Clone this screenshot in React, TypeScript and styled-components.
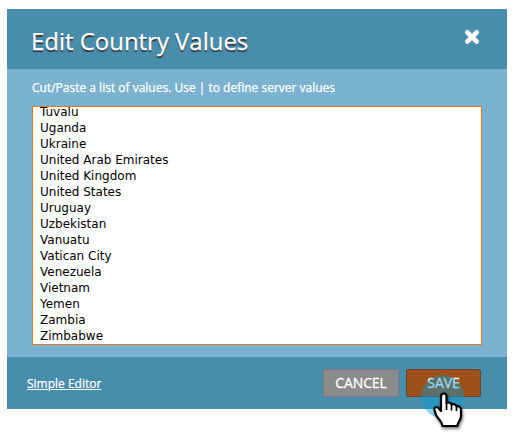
import React from "react";
import styled, { createGlobalStyle } from "styled-components";

const GlobalStyle = createGlobalStyle`
  * { box-sizing: border-box; }
  body { margin: 0; background: #fff; font-family: "Open Sans", "Noto Sans", sans-serif; overflow: hidden; }
`;

const Dialog = styled.section`
  width: 500px;
  height: 400px;
  margin: 9px 0 0 7px;
  display: flex;
  flex-direction: column;
  background: #7ab2cf;
  color: #fff;
`;

const Header = styled.header`
  height: 60px;
  padding: 0 27px 0 24px;
  display: flex;
  justify-content: space-between;
  background: #498dad;
`;

const Title = styled.h1`
  margin: 0;
  padding-top: 1px;
  font-size: 24px;
  line-height: 62px;
  font-weight: 400;
  letter-spacing: -0.03px;
  white-space: nowrap;
  text-shadow: 0 2px 1px #333;
  -webkit-text-stroke: 0.25px #fff;
`;

const CloseButton = styled.button`
  width: 16px;
  height: 16px;
  margin-top: 20px;
  padding: 0;
  border: 0;
  background: none;
  display: block;
  svg { display: block; }
`;

const Body = styled.main`
  height: 288px;
  padding: 9px 25px 12px;
`;

const Hint = styled.p`
  height: 28px;
  margin: 0;
  font-size: 12px;
  line-height: 19px;
  white-space: nowrap;
  -webkit-text-stroke: 0.25px #fff;
`;

const ValueList = styled.div`
  height: 239px;
  padding-left: 7px;
  border: 1px solid #e87722;
  background: #fff;
  color: #000;
  overflow: hidden;
  display: flex;
  flex-direction: column;
  justify-content: flex-end;
  font-family: "DejaVu Sans", sans-serif;
  font-size: 12px;
  line-height: 16px;
`;

const Value = styled.div`
  flex: none;
  white-space: nowrap;
`;

const Footer = styled.footer`
  height: 52px;
  padding: 0 26px 0 20px;
  display: flex;
  align-items: center;
  background: #498dad;
`;

const EditorLink = styled.a`
  margin-right: auto;
  font-size: 12px;
  color: #fff;
  text-decoration: underline;
  -webkit-text-stroke: 0.2px #fff;
`;

const Button = styled.button<{ $primary?: boolean }>`
  width: ${(p) => (p.$primary ? 75 : 76)}px;
  height: 28px;
  margin-left: ${(p) => (p.$primary ? 7 : 0)}px;
  padding: 0;
  border: 1px solid ${(p) => (p.$primary ? "#65462f" : "#7c7c7c")};
  border-radius: 2px;
  background: ${(p) => (p.$primary ? "#9d5017" : "#8b8b8b")};
  color: #fff;
  font: 400 14px/26px "Open Sans", sans-serif;
  letter-spacing: -0.1px;
  -webkit-text-stroke: 0.3px #fff;
`;

const Pointer = styled.svg`
  position: absolute;
  left: 418px;
  top: 372px;
`;

const Hand = styled.g`
  filter: drop-shadow(1px 2px 1.5px rgba(0, 0, 0, 0.5));
`;

const values = [
  "Tuvalu", "Uganda", "Ukraine", "United Arab Emirates", "United Kingdom",
  "United States", "Uruguay", "Uzbekistan", "Vanuatu", "Vatican City",
  "Venezuela", "Vietnam", "Yemen", "Zambia", "Zimbabwe",
];

export default function App() {
  return (
    <>
      <GlobalStyle />
      <Dialog>
        <Header>
          <Title>Edit Country Values</Title>
          <CloseButton aria-label="Close">
            <svg width="16" height="16" viewBox="0 0 16 16">
              <path
                d="M3.3 3.3L12.7 12.7M12.7 3.3L3.3 12.7"
                stroke="#fff"
                strokeWidth="4.6"
                strokeLinecap="round"
              />
            </svg>
          </CloseButton>
        </Header>
        <Body>
          <Hint>Cut/Paste a list of values. Use | to define server values</Hint>
          <ValueList>
            {values.map((v) => <Value key={v}>{v}</Value>)}
          </ValueList>
        </Body>
        <Footer>
          <EditorLink>Simple Editor</EditorLink>
          <Button>CANCEL</Button>
          <Button $primary>SAVE</Button>
        </Footer>
      </Dialog>
      <Pointer width="60" height="63" viewBox="0 0 60 63">
        <circle cx="24.7" cy="24.7" r="21.5" fill="#00a0dc" fillOpacity="0.42" />
        <Hand>
          <path
            d="M25.3 21.5C27.3 21 28.5 22.5 28.5 24.5V31C31 30 33 31 33.5 32.5C35.5 31.5 38 32.5 38.5 34.5C41 33.5 43 35.5 43 38V44C43 48 39.5 50 39.5 54H24.5C23.5 48 20 47 18 43L16.5 38C16 35.5 18 34.5 20 35.5L23 39V24.5Q23 22 25.3 21.5Z"
            fill="#fff" stroke="#000" strokeWidth="2.2" strokeLinejoin="round"
          />
          <path d="M28.5 30V38M33.5 32V38.5M38.5 34.5V39" stroke="#000" strokeWidth="1.7" />
        </Hand>
      </Pointer>
    </>
  );
}
